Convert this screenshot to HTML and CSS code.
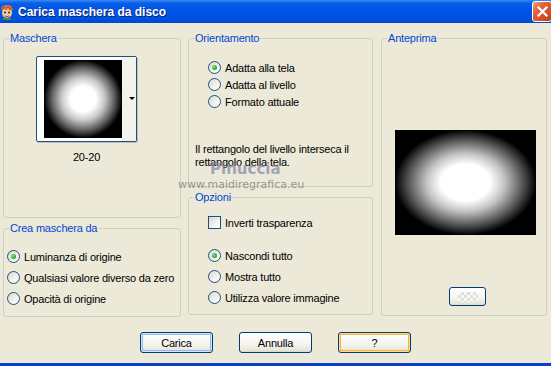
FILE: index.html
```html
<!DOCTYPE html>
<html lang="it">
<head>
    <meta charset="UTF-8">
    <title>Carica maschera da disco</title>
    <link rel="stylesheet" href="styles.css">
</head>
<body>
    <div class="window">
        <div class="titlebar">
            <svg class="app-icon" width="14" height="16" viewBox="0 0 14 16">
                <path d="M1 5 Q2 1 7 1 Q12 1 13 5 L12 7 L2 7 Z" fill="#d8742a"/>
                <ellipse cx="7" cy="9" rx="5" ry="5" fill="#f6c9a0"/>
                <circle cx="5" cy="8.5" r="1" fill="#2a2a2a"/>
                <circle cx="9" cy="8.5" r="1" fill="#2a2a2a"/>
                <path d="M5 12 Q7 13.5 9 12" stroke="#b03a1a" fill="none"/>
                <path d="M2 6 L4 3 L6 6 L8 3 L10 6 L12 3" stroke="#a84a14" fill="none"/>
                <rect x="3" y="14" width="8" height="2" fill="#3d8f3d"/>
            </svg>
            <span class="title">Carica maschera da disco</span>
            <span class="close">
                <svg width="11" height="11" viewBox="0 0 11 11">
                    <path d="M1.5 1.5 L9.5 9.5 M9.5 1.5 L1.5 9.5" stroke="#fff" stroke-width="2.2" stroke-linecap="square"/>
                </svg>
            </span>
        </div>

        <div class="body">
            <div class="columns">
                <div class="col col-left">
                    <fieldset class="group g-mask">
                        <legend>Maschera</legend>
                        <div class="mask-picker">
                            <div class="mask-thumb"></div>
                            <div class="mask-drop"><span class="arrow"></span></div>
                        </div>
                        <div class="mask-name">20-20</div>
                    </fieldset>
                    <fieldset class="group g-source">
                        <legend>Crea maschera da</legend>
                        <div class="inner">
                            <div class="opt"><span class="radio on"></span>Luminanza di origine</div>
                            <div class="opt"><span class="radio"></span>Qualsiasi valore diverso da zero</div>
                            <div class="opt"><span class="radio"></span>Opacità di origine</div>
                        </div>
                    </fieldset>
                </div>

                <div class="col col-mid">
                    <fieldset class="group g-orient">
                        <legend>Orientamento</legend>
                        <div class="inner">
                            <div class="opt short"><span class="radio on"></span>Adatta alla tela</div>
                            <div class="opt short"><span class="radio"></span>Adatta al livello</div>
                            <div class="opt short"><span class="radio"></span>Formato attuale</div>
                        </div>
                        <p class="note">Il rettangolo del livello interseca il rettangolo della tela.</p>
                    </fieldset>
                    <fieldset class="group g-options">
                        <legend>Opzioni</legend>
                        <div class="inner">
                            <div class="opt"><span class="check"></span>Inverti trasparenza</div>
                            <div class="opt spaced"><span class="radio on"></span>Nascondi tutto</div>
                            <div class="opt"><span class="radio"></span>Mostra tutto</div>
                            <div class="opt"><span class="radio"></span>Utilizza valore immagine</div>
                        </div>
                    </fieldset>
                </div>

                <div class="col col-right">
                    <fieldset class="group g-preview">
                        <legend>Anteprima</legend>
                        <div class="preview"></div>
                        <button class="btn small"><span class="ghost"></span></button>
                    </fieldset>
                </div>
            </div>

            <div class="actions">
                <button class="btn default">Carica</button>
                <button class="btn">Annulla</button>
                <button class="btn hot">?</button>
            </div>
        </div>

        <div class="watermark">
            <div class="wm-name">Pinuccia</div>
            <div class="wm-site">www.maidiregrafica.eu</div>
        </div>
    </div>
</body>
</html>
```

FILE: styles.css
```css
body {
    margin: 0;
    font-family: "Liberation Sans", Arial, sans-serif;
    font-size: 11px;
    letter-spacing: -0.2px;
    color: #000;
    background: #ece9d8;
}
.window {
    position: relative;
    width: 551px;
    height: 366px;
    background: #ece9d8;
    border-bottom: 3px solid #0b3fcf;
    box-sizing: border-box;
    overflow: hidden;
}
.titlebar {
    height: 23px;
    display: flex;
    align-items: center;
    background: linear-gradient(#3b8cf5 0, #0a5fe8 3px, #0055e5 40%, #0052e0 80%, #0046d4 100%);
}
.app-icon {
    margin-top: 1px;
}
.title {
    margin-left: 4px;
    color: #fff;
    font-weight: bold;
    font-size: 12px;
    letter-spacing: 0;
    text-shadow: 1px 1px 0 #0a1d7a;
    flex: 1;
}
.close {
    width: 20px;
    height: 21px;
    margin-right: -1px;
    margin-top: -1px;
    border: 1px solid #fff;
    border-radius: 3px;
    box-sizing: border-box;
    background: linear-gradient(135deg, #f0a088 0, #e2623d 35%, #cf4a1f 80%, #b83a12 100%);
    display: flex;
    align-items: center;
    justify-content: center;
}
.body {
    padding: 9px 0 0 3px;
}
.columns {
    display: flex;
    gap: 7px;
}
.col {
    display: flex;
    flex-direction: column;
    gap: 4px;
}
.col-right {
    margin-left: 1px;
}
.group {
    margin: 0;
    padding: 0;
    border: 1px solid #d0d0bf;
    border-radius: 3px;
    box-sizing: border-box;
}
.group legend {
    color: #0046d5;
    line-height: 13px;
    padding: 0 1px;
    margin-left: 5px;
}
.col-left .group { width: 178px; }
.col-mid .group { width: 185px; }
.g-mask { height: 186px; padding-top: 11px; }
.g-source { height: 95px; padding-top: 11px; }
.g-source .inner { padding-left: 3px; }
.g-orient { height: 155px; padding-top: 14px; }
.g-orient .inner, .g-options .inner { padding-left: 19px; }
.g-options { height: 124px; padding-top: 8px; }
.g-preview { width: 166px; height: 284px; }

.mask-picker {
    margin-left: 32px;
    width: 101px;
    height: 86px;
    border: 1px solid #1c4f86;
    border-radius: 2px;
    box-sizing: border-box;
    background: #fff;
    display: flex;
    padding: 3px 0 3px 7px;
    box-shadow: 1px 1px 0 #c2bfb0;
}
.mask-thumb {
    width: 78px;
    height: 78px;
    background: radial-gradient(circle closest-side, #fff 0, #fff 33%, #c8c8c8 55%, #606060 80%, #000 100%);
    background-color: #000;
}
.mask-drop {
    flex: 1;
    margin: -3px 0;
    background: #f3f2ec;
    position: relative;
}
.arrow {
    position: absolute;
    left: 7px;
    top: 40px;
    border-left: 3px solid transparent;
    border-right: 3px solid transparent;
    border-top: 3px solid #000;
}
.mask-name {
    margin-left: 32px;
    width: 101px;
    margin-top: 9px;
    text-align: center;
    line-height: 13px;
}

.opt {
    display: flex;
    align-items: center;
    height: 21px;
    white-space: nowrap;
}
.opt.short { height: 17px; }
.opt.spaced { margin-top: 12px; }
.radio, .check {
    width: 13px;
    height: 13px;
    box-sizing: border-box;
    border: 1px solid #1c5180;
    margin-right: 4px;
    flex: none;
    background: linear-gradient(135deg, #d8d6cc 0, #f2f1ec 55%, #fff 100%);
    position: relative;
}
.radio { border-radius: 50%; }
.radio.on::after {
    content: "";
    position: absolute;
    left: 3px;
    top: 3px;
    width: 5px;
    height: 5px;
    border-radius: 50%;
    background: radial-gradient(circle at 35% 35%, #7ee07e, #22a722 70%, #178a17);
}
.note {
    margin: 33px 6px 0 6px;
    line-height: 13px;
}

.preview {
    margin: 85px 0 0 13px;
    width: 141px;
    height: 105px;
    background: radial-gradient(ellipse closest-side, #fff 0, #fff 35%, #c4c4c4 55%, #5a5a5a 80%, #000 100%);
    background-color: #000;
}

.btn {
    font-family: inherit;
    font-size: 11px;
    letter-spacing: -0.2px;
    width: 73px;
    height: 21px;
    padding: 0;
    border: 1px solid #003c74;
    border-radius: 3px;
    background: linear-gradient(#ffffff 0, #f5f4ef 60%, #e8e6dc 90%, #d9d5c8 100%);
    color: #000;
}
.btn.default {
    box-shadow: inset 0 0 0 1px #cee7ff, inset 0 0 0 2px #98b8ea;
}
.btn.hot {
    box-shadow: inset 0 0 0 1px #ffdb9c, inset 0 0 0 2px #f4b43c;
}
.btn.small {
    width: 37px;
    height: 19px;
    margin: 52px 0 0 67px;
    display: flex;
    align-items: center;
    justify-content: center;
}
.ghost {
    width: 20px;
    height: 10px;
    background:
        linear-gradient(45deg, #e2e0d8 25%, transparent 25%, transparent 75%, #e2e0d8 75%),
        linear-gradient(45deg, #e2e0d8 25%, #f8f8f4 25%, #f8f8f4 75%, #e2e0d8 75%);
    background-size: 6px 6px;
    background-position: 0 0, 3px 3px;
}
.actions {
    display: flex;
    justify-content: center;
    gap: 26px;
    margin-top: 15px;
    padding-right: 3px;
}

.watermark {
    position: absolute;
    left: 178px;
    top: 160px;
    pointer-events: none;
}
.wm-name {
    margin-left: 32px;
    font-family: "DejaVu Sans", sans-serif;
    font-weight: bold;
    font-size: 15px;
    letter-spacing: 0;
    line-height: 18px;
    color: rgba(125, 132, 165, 0.7);
}
.wm-site {
    font-family: "DejaVu Sans", sans-serif;
    font-size: 11px;
    letter-spacing: 0;
    line-height: 13px;
    color: rgba(110, 110, 115, 0.7);
}
```
